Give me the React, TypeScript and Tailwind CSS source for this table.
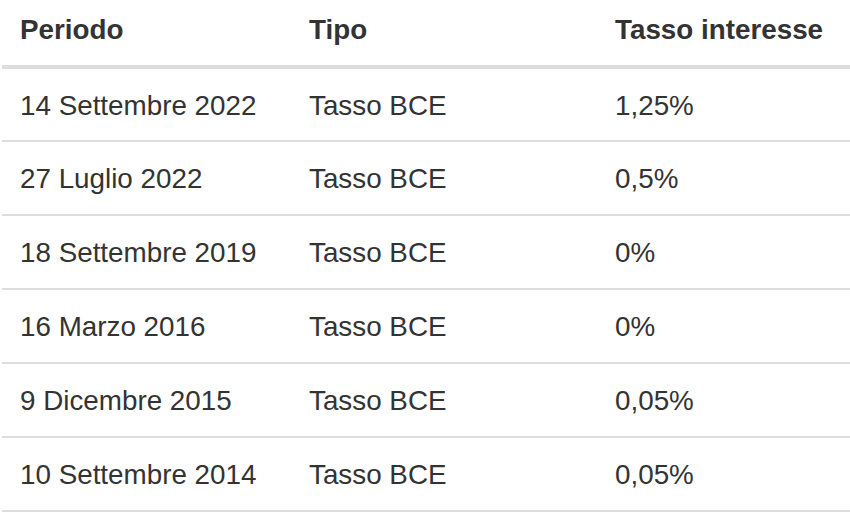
export default function App() {
  const rows = [
    { periodo: '14 Settembre 2022', tipo: 'Tasso BCE', tasso: '1,25%' },
    { periodo: '27 Luglio 2022', tipo: 'Tasso BCE', tasso: '0,5%' },
    { periodo: '18 Settembre 2019', tipo: 'Tasso BCE', tasso: '0%' },
    { periodo: '16 Marzo 2016', tipo: 'Tasso BCE', tasso: '0%' },
    { periodo: '9 Dicembre 2015', tipo: 'Tasso BCE', tasso: '0,05%' },
    { periodo: '10 Settembre 2014', tipo: 'Tasso BCE', tasso: '0,05%' },
  ]

  return (
    <div className="w-[850px] h-[528px] bg-white pl-[2px] overflow-hidden">
      <table className="w-[848px] border-collapse text-left text-[#333] text-[27.8px] font-['Liberation_Sans',Arial,sans-serif]">
        <thead>
          <tr className="border-b-4 border-[#dddddd]">
            <th className="w-[289px] h-[67px] pl-[18px] pb-[5px] font-bold">Periodo</th>
            <th className="w-[306px] h-[67px] pl-[18px] pb-[5px] font-bold">Tipo</th>
            <th className="h-[67px] pl-[18px] pb-[5px] font-bold">Tasso interesse</th>
          </tr>
        </thead>
        <tbody>
          {rows.map((r, i) => (
            <tr key={i} className="border-b-2 border-[#dddddd]">
              <td className="h-[74px] pl-[18px] pt-[2px] font-normal">{r.periodo}</td>
              <td className="h-[74px] pl-[18px] pt-[2px] font-normal">{r.tipo}</td>
              <td className="h-[74px] pl-[18px] pt-[2px] font-normal">{r.tasso}</td>
            </tr>
          ))}
        </tbody>
      </table>
    </div>
  )
}
